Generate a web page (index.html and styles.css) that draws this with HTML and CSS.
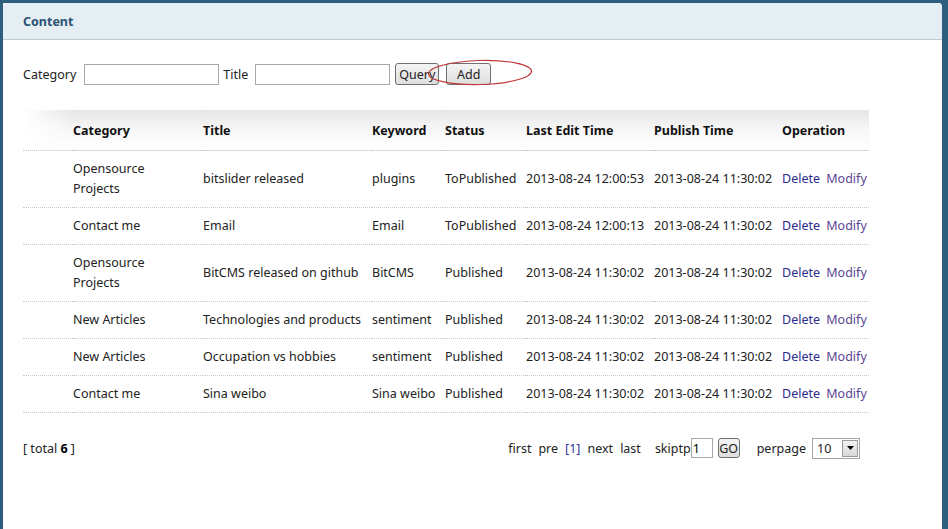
FILE: index.html
```html
<!DOCTYPE html>
<html>
<head>
<meta charset="utf-8">
<link rel="stylesheet" href="styles.css">
</head>
<body>
<div class="panel">
  <div class="panel-head">Content</div>
  <div class="panel-body">
    <div class="search">
      <label>Category</label><input class="txt" type="text">
      <label class="lbl2">Title</label><input class="txt" type="text">
      <button class="btn btn-q">Query</button>
      <span class="add-wrap"><button class="btn btn-add">Add</button>
        <svg class="ring" width="106" height="28" viewBox="0 0 106 28"><ellipse cx="53" cy="13.5" rx="51.5" ry="12" fill="none" stroke="#c0383c" stroke-width="1.2" transform="rotate(-1.5 53 13.5)"/></svg>
      </span>
    </div>
    <table class="grid">
      <colgroup>
        <col style="width:50px"><col style="width:130px"><col style="width:169px"><col style="width:73px"><col style="width:81px"><col style="width:128px"><col style="width:128px"><col style="width:87px">
      </colgroup>
      <thead>
        <tr><th></th><th>Category</th><th>Title</th><th>Keyword</th><th>Status</th><th>Last Edit Time</th><th>Publish Time</th><th>Operation</th></tr>
      </thead>
      <tbody>
        <tr><td></td><td>Opensource<br>Projects</td><td>bitslider released</td><td>plugins</td><td>ToPublished</td><td>2013-08-24 12:00:53</td><td>2013-08-24 11:30:02</td><td><a class="del">Delete</a> <a class="mod">Modify</a></td></tr>
        <tr><td></td><td>Contact me</td><td>Email</td><td>Email</td><td>ToPublished</td><td>2013-08-24 12:00:13</td><td>2013-08-24 11:30:02</td><td><a class="del">Delete</a> <a class="mod">Modify</a></td></tr>
        <tr><td></td><td>Opensource<br>Projects</td><td>BitCMS released on github</td><td>BitCMS</td><td>Published</td><td>2013-08-24 11:30:02</td><td>2013-08-24 11:30:02</td><td><a class="del">Delete</a> <a class="mod">Modify</a></td></tr>
        <tr><td></td><td>New Articles</td><td>Technologies and products</td><td>sentiment</td><td>Published</td><td>2013-08-24 11:30:02</td><td>2013-08-24 11:30:02</td><td><a class="del">Delete</a> <a class="mod">Modify</a></td></tr>
        <tr><td></td><td>New Articles</td><td>Occupation vs hobbies</td><td>sentiment</td><td>Published</td><td>2013-08-24 11:30:02</td><td>2013-08-24 11:30:02</td><td><a class="del">Delete</a> <a class="mod">Modify</a></td></tr>
        <tr><td></td><td>Contact me</td><td>Sina weibo</td><td>Sina weibo</td><td>Published</td><td>2013-08-24 11:30:02</td><td>2013-08-24 11:30:02</td><td><a class="del">Delete</a> <a class="mod">Modify</a></td></tr>
      </tbody>
    </table>
    <div class="footer">
      <div class="total">[ total <b>6</b> ]</div>
      <div class="pager">
        <span>first</span><span>pre</span><span class="cur">[1]</span><span>next</span><span>last</span>
        <span class="skip">skiptp<input class="pg" type="text" value="1"></span>
        <button class="btn go">GO</button>
        <span class="per">perpage</span>
        <span class="sel"><span class="sel-val">10</span><span class="sel-btn"><svg width="7" height="4" viewBox="0 0 7 4"><path d="M0 0h7L3.5 4z" fill="#000"/></svg></span></span>
      </div>
    </div>
  </div>
</div>
</body>
</html>
```
FILE: styles.css
```css
html, body { margin: 0; padding: 0; height: 100%; }
body {
  background: #2e5e7e;
  font-family: "Noto Sans", "Open Sans", sans-serif;
  font-size: 12.5px;
  color: #222;
  overflow: hidden;
}
.panel {
  margin: 3px 6px 0 3px;
  background: #fff;
  height: calc(100% - 3px);
  border-top-right-radius: 4px;
}
.panel-head {
  height: 36px;
  line-height: 37px;
  background: #e4eef3;
  border-bottom: 1px solid #b9ccd7;
  padding-left: 20px;
  font-weight: bold;
  font-size: 12.5px;
  color: #2b5274;
  border-top-right-radius: 4px;
}
.panel-body { padding: 0 0 0 20px; }
.search {
  display: flex;
  align-items: center;
  height: 22px;
  margin-top: 23px;
}
.search label { margin-right: 8px; }
.search .lbl2 { margin-left: 4px; margin-right: 7px; }
.txt {
  border: 1px solid #a9a9a9;
  padding: 0;
  margin: 0;
  box-sizing: border-box;
  height: 21px;
  width: 135px;
}
.btn {
  font-family: inherit;
  font-size: 12.5px;
  color: #222;
  background: linear-gradient(#f4f4f4, #dedede);
  border: 1px solid #707070;
  border-radius: 3px;
  padding: 0;
  height: 22px;
  box-sizing: border-box;
  cursor: default;
}
.search .btn-q { margin-left: 5px; width: 44px; }
.add-wrap { position: relative; display: inline-flex; margin-left: 7px; }
.search .btn-add { margin-left: 0; width: 45px; }
.ring { position: absolute; left: -19px; top: -4px; pointer-events: none; }
.grid {
  margin-top: 25px;
  border-collapse: collapse;
  table-layout: fixed;
  width: 846px;
}
.grid th {
  height: 40px;
  padding: 0;
  text-align: left;
  font-weight: bold;
  color: #111;
  background: linear-gradient(#e6e6e6, #f7f7f7 50%, #fff);
  border-bottom: 1px dotted #c8c8c8;
  white-space: nowrap;
}
.grid th:first-child { background: linear-gradient(90deg, rgba(255,255,255,1), rgba(255,255,255,0)), linear-gradient(#e6e6e6, #f7f7f7 50%, #fff); }
.grid td {
  padding: 8px 0;
  line-height: 20px;
  border-bottom: 1px dotted #c8c8c8;
  white-space: nowrap;
  vertical-align: middle;
}
.del { color: #2c2c8e; }
.mod { color: #5b4592; margin-left: 3px; }
.footer {
  display: flex;
  justify-content: space-between;
  align-items: center;
  width: 837px;
  margin-top: 24px;
  height: 22px;
}
.total b { color: #000; }
.pager { display: flex; align-items: center; }
.pager > span { margin-right: 7px; }
.pager .skip { margin-left: 7px; margin-right: 0; display: inline-flex; align-items: center; }
.pager .cur { color: #3333a0; }
.pg {
  width: 22px; height: 20px; box-sizing: border-box;
  border: 1px solid #a9a9a9; padding: 0 0 0 1px; margin: 0;
  font-family: inherit; font-size: 12.5px;
}
.go { width: 22px; height: 20px; margin-left: 5px; font-size: 12.5px; border-radius: 3px; }
.pager .per { margin-left: 17px; margin-right: 6px; }
.sel {
  display: inline-flex; align-items: center;
  width: 48px; height: 21px; box-sizing: border-box;
  border: 1px solid #a5a5a5; margin-right: 0 !important;
}
.sel-val { flex: 1; padding-left: 4px; }
.sel-btn {
  width: 16px; height: 17px; margin-right: 1px;
  background: linear-gradient(#f2f2f2, #d9d9d9);
  border: 1px solid #9a9a9a; box-sizing: border-box;
  display: flex; align-items: center; justify-content: center;
}
```
